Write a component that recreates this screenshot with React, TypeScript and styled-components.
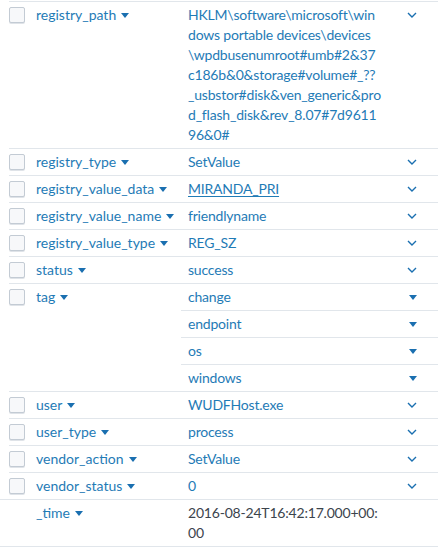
import React from "react";
import styled, { createGlobalStyle } from "styled-components";

const GlobalStyle = createGlobalStyle`
  body {
    margin: 0;
    background: #ffffff;
    font-family: Lato, "Open Sans", "Liberation Sans", sans-serif;
    font-size: 14px;
  }
`;

interface IField {
  name: string;
  values: string[];
  link?: boolean;
  multi?: boolean;
}

const fields: IField[] = [
  {
    name: "registry_path",
    values: [
      "HKLM\\software\\microsoft\\windows portable devices\\devices\\wpdbusenumroot#umb#2&37c186b&0&storage#volume#_??_usbstor#disk&ven_generic&prod_flash_disk&rev_8.07#7d961196&0#",
    ],
  },
  { name: "registry_type", values: ["SetValue"] },
  { name: "registry_value_data", values: ["MIRANDA_PRI"], link: true },
  { name: "registry_value_name", values: ["friendlyname"] },
  { name: "registry_value_type", values: ["REG_SZ"] },
  { name: "status", values: ["success"] },
  { name: "tag", values: ["change", "endpoint", "os", "windows"], multi: true },
  { name: "user", values: ["WUDFHost.exe"] },
  { name: "user_type", values: ["process"] },
  { name: "vendor_action", values: ["SetValue"] },
  { name: "vendor_status", values: ["0"] },
];

const Table = styled.div`
  display: flex;
  flex-direction: column;
  padding-top: 1px;
`;

const Row = styled.div<{ $plain?: boolean }>`
  display: grid;
  grid-template-columns: ${(p) => (p.$plain ? "36px" : "27px")} 145px 1fr;
  margin-left: ${(p) => (p.$plain ? "0" : "9px")};
  border-top: 1px solid #e1e6eb;
  &:last-child {
    border-bottom: 1px solid #e1e6eb;
  }
`;

const CheckCell = styled.div`
  padding-top: 5px;
`;

const Checkbox = styled.div`
  width: 14px;
  height: 14px;
  border: 1px solid #c3cbd4;
  border-radius: 2px;
  background: #f7f8fa;
  box-shadow: 0 1px 0 #dfe3e8;
`;

const FieldCell = styled.div`
  padding: 3px 0;
  line-height: 20px;
  color: #1f7bb6;
  white-space: nowrap;
`;

const Caret = styled.svg<{ $inline?: boolean }>`
  width: 8px;
  height: 5px;
  margin-left: ${(p) => (p.$inline ? "5px" : "0")};
  vertical-align: 2px;
  fill: #1a6fb0;
`;

const Values = styled.div`
  display: flex;
  flex-direction: column;
`;

const ValueLine = styled.div`
  display: grid;
  grid-template-columns: 193px 1fr;
  padding: 3px 0 3px 7px;
  & + & {
    border-top: 1px solid #e1e6eb;
  }
`;

const ValueText = styled.span<{ $link?: boolean; $plain?: boolean }>`
  line-height: 20px;
  letter-spacing: -0.2px;
  color: ${(p) => (p.$plain ? "#3c444d" : "#1f7bb6")};
  text-decoration: ${(p) => (p.$link ? "underline" : "none")};
  text-underline-offset: 2px;
  word-break: break-all;
`;

const IconCell = styled.div`
  display: flex;
  justify-content: flex-end;
  padding-right: 21px;
  height: 20px;
  align-items: center;
`;

const Chevron = styled.svg`
  width: 10px;
  height: 6px;
  fill: none;
  stroke: #1a6fb0;
  stroke-width: 1.4;
`;

const App = () => {
  return (
    <>
      <GlobalStyle />
      <Table>
        {fields.map((f) => (
          <Row key={f.name}>
            <CheckCell>
              <Checkbox />
            </CheckCell>
            <FieldCell>
              {f.name}
              <Caret $inline viewBox="0 0 8 5">
                <path d="M0 0 H8 L4 5 Z" />
              </Caret>
            </FieldCell>
            <Values>
              {f.values.map((v) => (
                <ValueLine key={v}>
                  <ValueText $link={f.link}>{v}</ValueText>
                  <IconCell>
                    {f.multi ? (
                      <Caret viewBox="0 0 8 5">
                        <path d="M0 0 H8 L4 5 Z" />
                      </Caret>
                    ) : (
                      <Chevron viewBox="0 0 10 6">
                        <path d="M1 1 L5 5 L9 1" />
                      </Chevron>
                    )}
                  </IconCell>
                </ValueLine>
              ))}
            </Values>
          </Row>
        ))}
        <Row $plain>
          <CheckCell />
          <FieldCell>
            _time
            <Caret $inline viewBox="0 0 8 5">
              <path d="M0 0 H8 L4 5 Z" />
            </Caret>
          </FieldCell>
          <Values>
            <ValueLine>
              <ValueText $plain>2016-08-24T16:42:17.000+00:00</ValueText>
            </ValueLine>
          </Values>
        </Row>
      </Table>
    </>
  );
};

export default App;
